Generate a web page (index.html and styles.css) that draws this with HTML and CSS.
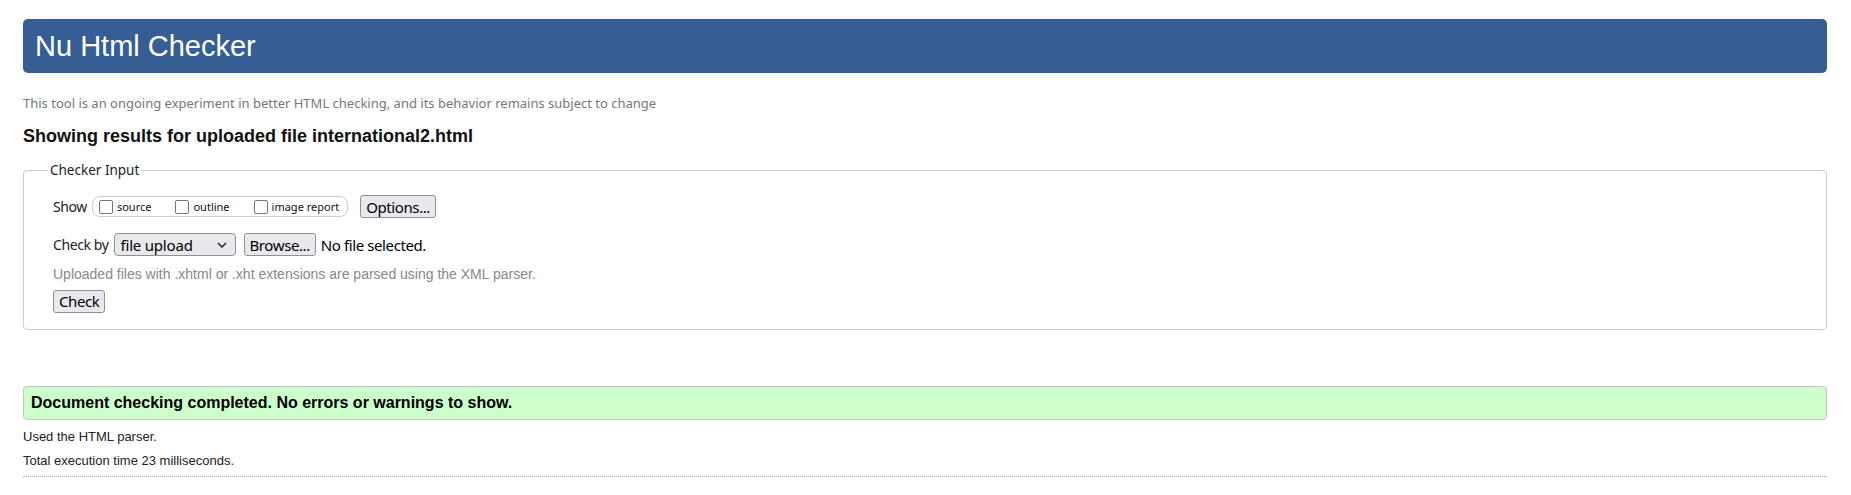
FILE: index.html
```html
<!DOCTYPE html>
<html lang="en">
<head>
<meta charset="utf-8">
<title>Showing results for uploaded file international2.html - Nu Html Checker</title>
<link rel="stylesheet" href="styles.css">
</head>
<body>
<h1 class="banner">Nu Html Checker</h1>
<p class="intro">This tool is an ongoing experiment in better HTML checking, and its behavior remains subject to change</p>
<h2 class="results-title">Showing results for uploaded file international2.html</h2>
<fieldset class="checker">
  <legend class="checker-legend">Checker Input</legend>
  <div class="row row-show">
    <span class="row-label">Show</span>
    <span class="show-group">
      <label class="opt"><span class="box"></span><span class="opt-text">source</span></label>
      <label class="opt"><span class="box"></span><span class="opt-text">outline</span></label>
      <label class="opt"><span class="box"></span><span class="opt-text">image report</span></label>
    </span>
    <span class="btn btn-options">Options...</span>
  </div>
  <div class="row row-check">
    <span class="row-label">Check by</span>
    <span class="select">file upload<svg class="chev" width="10" height="6" viewBox="0 0 10 6"><path d="M1 1 L5 5 L9 1" fill="none" stroke="#222" stroke-width="1.5"/></svg></span>
    <span class="btn btn-browse">Browse...</span>
    <span class="nofile">No file selected.</span>
  </div>
  <p class="note">Uploaded files with .xhtml or .xht extensions are parsed using the XML parser.</p>
  <div class="row row-submit"><span class="btn btn-check">Check</span></div>
</fieldset>
<p class="success">Document checking completed. No errors or warnings to show.</p>
<p class="stats">Used the HTML parser.</p>
<p class="stats">Total execution time 23 milliseconds.</p>
<hr class="end">
</body>
</html>
```
FILE: styles.css
```css
body {
  margin: 0;
  padding: 19px 24px 0 23px;
  background: #fff;
  color: #000;
  font-family: "Liberation Sans", Arial, sans-serif;
}
.banner {
  margin: 0;
  height: 54px;
  display: flex;
  align-items: center;
  padding-left: 12px;
  background: #375d95;
  color: #fff;
  border-radius: 5px;
  font-weight: normal;
  font-size: 29px;
  font-family: "Liberation Sans", Arial, sans-serif;
}
.intro {
  margin: 21px 0 0;
  font-family: "Noto Sans", "Open Sans", sans-serif;
  font-size: 13px;
  line-height: 18px;
  color: #777;
}
.results-title {
  margin: 13px 0 0;
  font-size: 18px;
  line-height: 22px;
  font-weight: bold;
  color: #111;
}
.checker {
  margin: 15px 0 0;
  padding: 17px 0 16px 29px;
  border: 1px solid #ccc;
  border-radius: 4px;
  min-width: 0;
}
.checker-legend {
  margin-left: -5px;
  padding: 0 2px;
  font-family: "Noto Sans", "Open Sans", sans-serif;
  font-size: 13.5px;
  line-height: 16px;
  color: #222;
}
.row {
  display: flex;
  align-items: center;
  height: 23px;
  font-family: "Noto Sans", "Open Sans", sans-serif;
}
.row-check { margin-top: 15px; }
.row-submit { margin-top: 6px; height: 24px; }
.row-label {
  font-size: 14px;
  letter-spacing: -0.4px;
  color: #222;
  margin-right: 5px;
}
.show-group {
  display: flex;
  align-items: center;
  height: 19px;
  padding: 0 8px 0 6px;
  border: 1px solid #ccc;
  border-radius: 8px;
}
.opt {
  display: flex;
  align-items: center;
  margin-right: 24px;
}
.opt:last-child { margin-right: 0; }
.box {
  width: 12px;
  height: 12px;
  border: 1px solid #767676;
  border-radius: 2px;
  background: #fff;
  margin-right: 4px;
}
.opt-text {
  font-size: 11px;
  color: #111;
}
.btn {
  display: inline-flex;
  align-items: center;
  height: 21px;
  padding: 0 5px;
  border: 1px solid #8f8f9d;
  border-radius: 3px;
  background: #e9e9ed;
  font-size: 15px;
  letter-spacing: -0.4px;
  color: #000;
}
.btn-options { margin-left: 12px; }
.select {
  display: inline-flex;
  align-items: center;
  justify-content: space-between;
  box-sizing: border-box;
  width: 122px;
  height: 23px;
  padding: 0 8px 0 6px;
  border: 1px solid #8f8f9d;
  border-radius: 4px;
  background: #e9e9ed;
  font-size: 15px;
  letter-spacing: -0.2px;
  color: #000;
}
.btn-browse { margin-left: 8px; }
.nofile {
  margin-left: 5px;
  font-size: 15px;
  letter-spacing: -0.4px;
  color: #000;
}
.note {
  margin: 9px 0 0;
  font-size: 14px;
  line-height: 18px;
  color: #888;
}
.success {
  margin: 56px 0 0;
  box-sizing: border-box;
  height: 34px;
  display: flex;
  align-items: center;
  padding-left: 7px;
  background: #ccffcc;
  border: 1px solid #c4c4c4;
  border-radius: 4px;
  font-weight: bold;
  font-size: 16px;
  color: #000;
}
.stats {
  margin: 8px 0 0;
  font-size: 13px;
  line-height: 17px;
  color: #222;
}
.stats + .stats { margin-top: 7px; }
.end {
  margin: 7px 0 0;
  border: 0;
  border-top: 1px dotted #aaa;
}
```
